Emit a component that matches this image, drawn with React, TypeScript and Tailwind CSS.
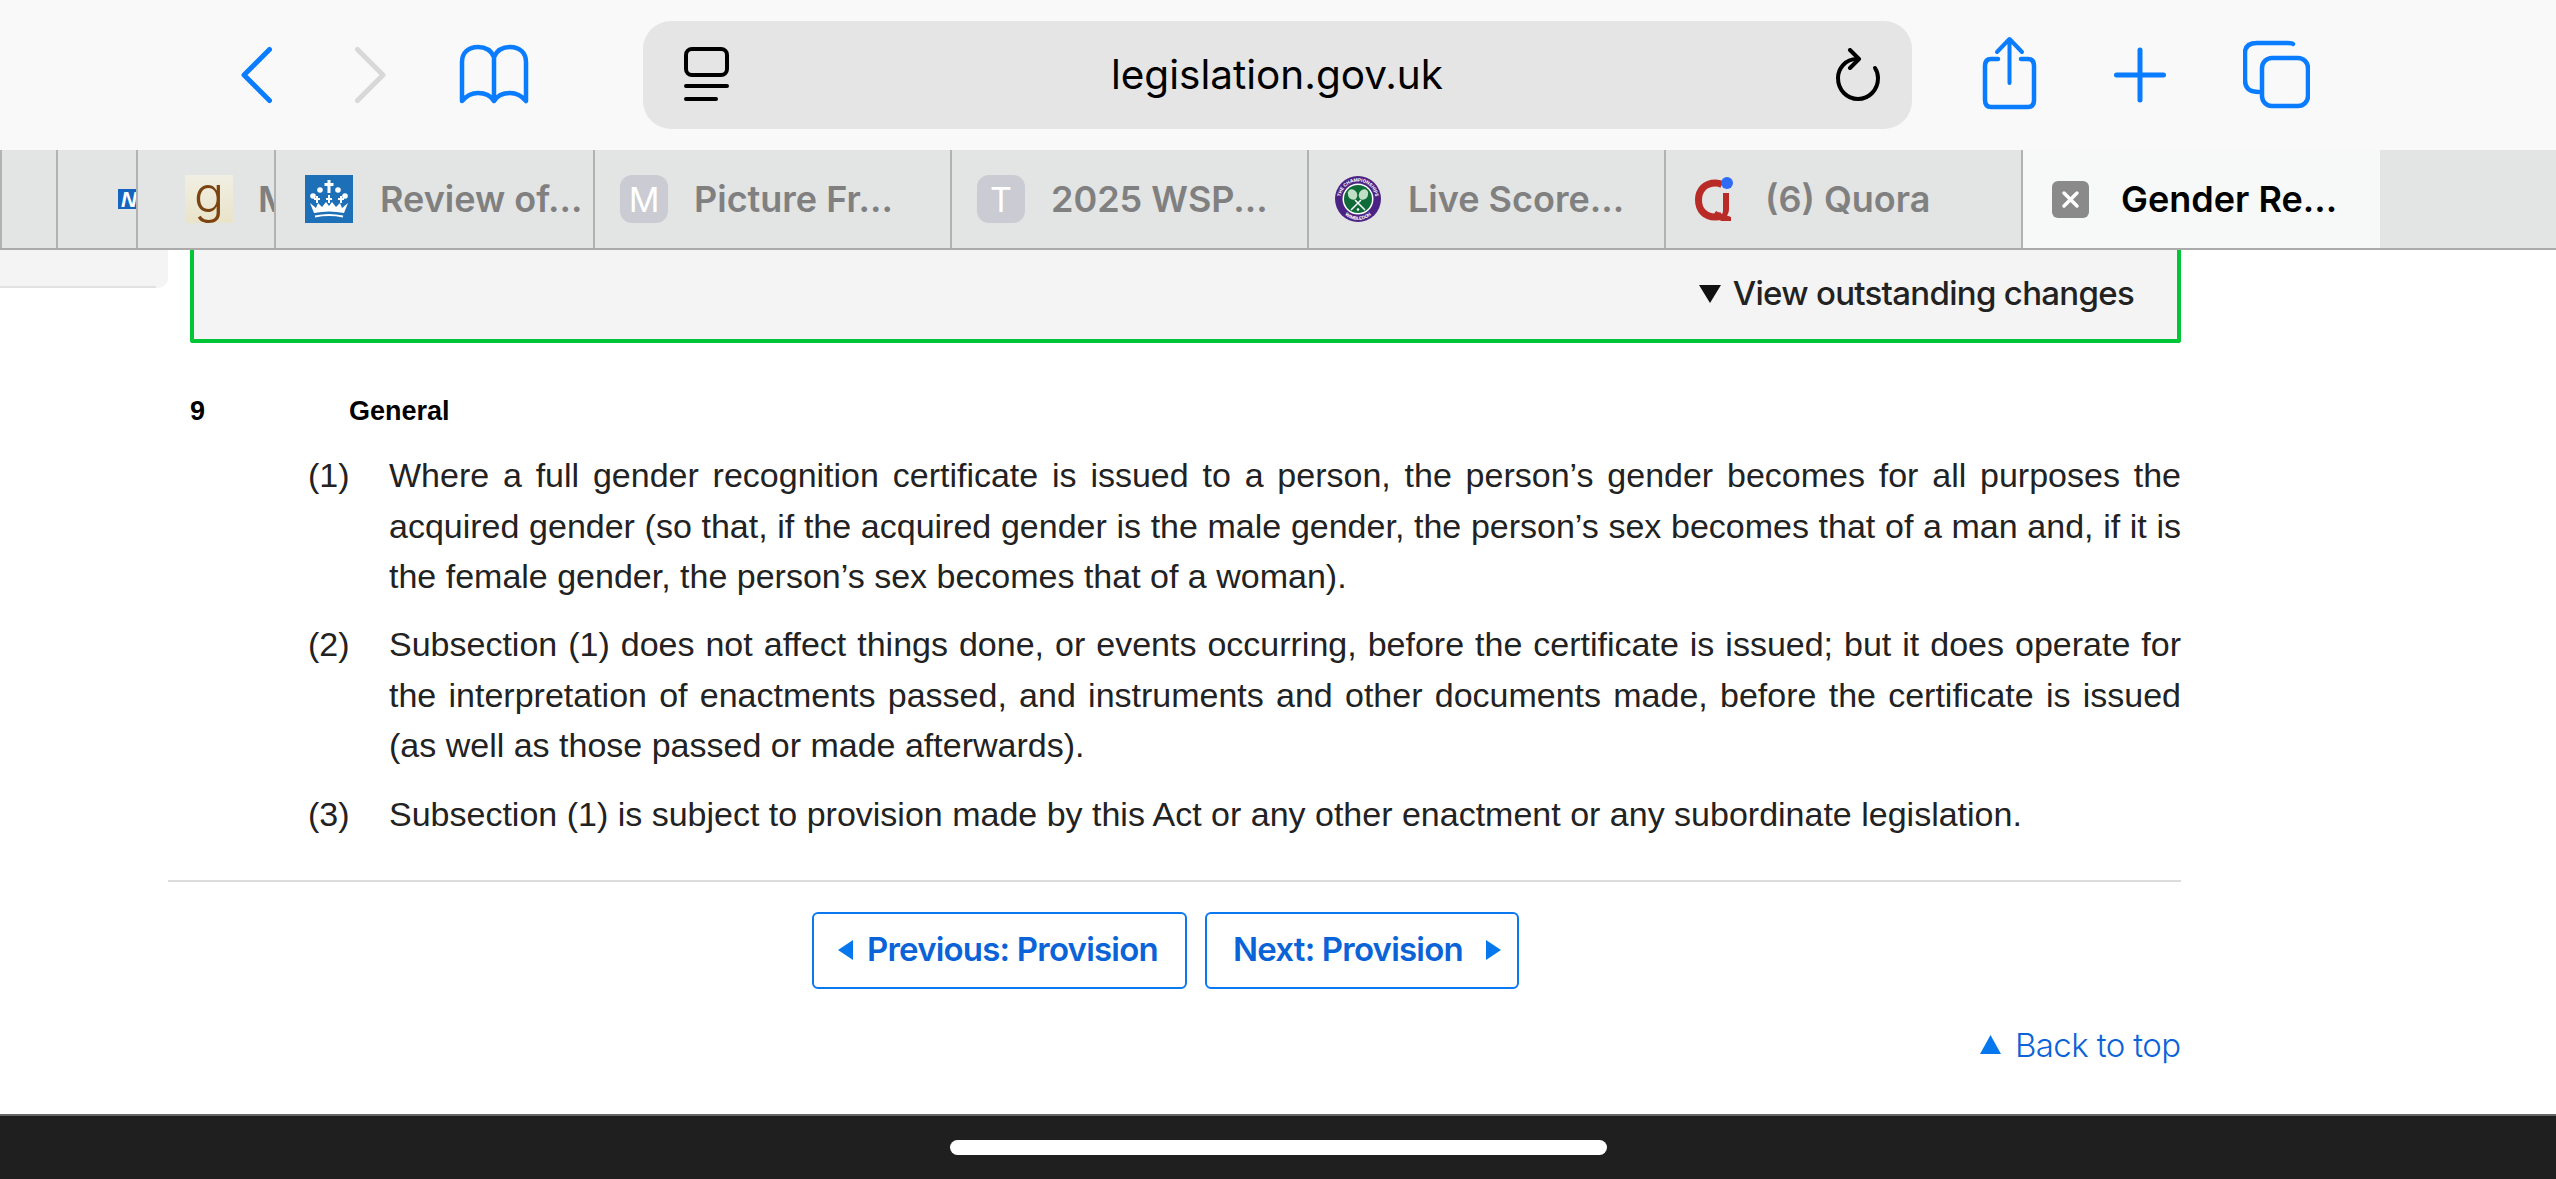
import type { ReactNode } from 'react';

const sans = "font-['Inter',sans-serif]";
const legal = "font-['Liberation_Sans',Arial,sans-serif]";

function ToolbarIcon({ width, className, children }: { width: number; className: string; children: ReactNode }) {
  return (
    <svg width={width} height={150} viewBox={`0 0 ${width} 150`} fill="none" strokeLinecap="round" strokeLinejoin="round" className={className}>
      {children}
    </svg>
  );
}

function Tab({ width, left, active, children }: { width: string; left: string; active?: boolean; children: ReactNode }) {
  return (
    <div
      className={`${width} ${left} ${active ? 'bg-[#f7f8f8] text-black' : 'border-r-2 border-[#b2b2b2] text-[#808080]'} flex h-full shrink-0 items-center overflow-hidden whitespace-nowrap text-[36px] font-semibold ${sans}`}
    >
      {children}
    </div>
  );
}

function LetterIcon({ letter }: { letter: string }) {
  return (
    <div className="flex h-[48px] w-[48px] shrink-0 items-center justify-center rounded-[12px] bg-[#cbcbd4] text-[34px] font-normal text-white">
      {letter}
    </div>
  );
}

function GovIcon() {
  return (
    <svg width="48" height="48" viewBox="0 0 48 48" className="shrink-0">
      <rect width="48" height="48" fill="#1d6fb8" />
      <g fill="#fff">
        <path d="M22.500 5h3v3h3v3h-3v7h-3v-7h-3V8h3z" />
        <circle cx="15" cy="15" r="2.800" />
        <circle cx="33" cy="15" r="2.800" />
        <circle cx="8" cy="21" r="2.800" />
        <circle cx="40" cy="21" r="2.800" />
        <path d="M11 21h2v2h2v2h-2v3h-2v-3H9v-2h2zM23 20h2v3h2v2h-2v3h-2v-3h-2v-2h2zM35 21h2v2h2v2h-2v3h-2v-3h-2v-2h2z" />
        <path d="M5 28l6 5 2-5 4 4 4-5 3 4 3-4 4 5 4-4 2 5 6-5-4 10q-15-3-30 0z" />
      </g>
      <path d="M10 41.500q14-3 28 0" fill="none" stroke="#fff" strokeWidth="2" />
    </svg>
  );
}

function WimbledonIcon() {
  return (
    <svg width="46" height="46" viewBox="0 0 46 46" className="shrink-0">
      <defs>
        <path id="ring-top" d="M5.500 23a17.500 17.500 0 0 1 35 0" />
        <path id="ring-bottom" d="M4 25a19 19 0 0 0 38 0" />
      </defs>
      <circle cx="23" cy="23" r="23" fill="#4b2385" />
      <circle cx="23" cy="23" r="15.500" fill="#fff" />
      <circle cx="23" cy="23" r="14" fill="#0f6b37" />
      <text fontSize="4.600" fontWeight="700" fill="#fff" fontFamily="Inter, sans-serif">
        <textPath href="#ring-top" startOffset="50%" textAnchor="middle">THE CHAMPIONSHIPS</textPath>
      </text>
      <text fontSize="4.600" fontWeight="700" fill="#fff" fontFamily="Inter, sans-serif">
        <textPath href="#ring-bottom" startOffset="50%" textAnchor="middle">WIMBLEDON</textPath>
      </text>
      <ellipse cx="17.500" cy="18.500" rx="4.500" ry="5.500" fill="#bfe0c4" transform="rotate(-25 17.500 18.500)" />
      <ellipse cx="28.500" cy="18.500" rx="4.500" ry="5.500" fill="#bfe0c4" transform="rotate(25 28.500 18.500)" />
      <path d="M20 24l10 10M26 24L16 34" stroke="#fff" strokeWidth="1.500" />
      <circle cx="23" cy="33.500" r="1.300" fill="#fff" />
    </svg>
  );
}

function QuoraIcon() {
  return (
    <svg width="44" height="48" viewBox="0 0 44 48" className="shrink-0">
      <path
        d="M28 9.500C26 8.500 24 8 21.500 8 11 8 4.500 15 4.500 25S11 42 21 42c3 0 5-.5 7-1.500"
        fill="none"
        stroke="#b92b27"
        strokeWidth="7"
      />
      <path d="M29 18h6v16c0 3-1 5-2 6.500l4 1.500v4H27l-7-7 2-3 6 3c1-1 1-3 1-5z" fill="#b92b27" />
      <circle cx="33" cy="8" r="6" fill="#2e6cf6" />
    </svg>
  );
}

function Clause({ num, children }: { num: string; children: ReactNode }) {
  return (
    <div className="mb-[17.500px] flex">
      <div className="w-[81px] shrink-0">{num}</div>
      <p className="flex-1 text-justify">{children}</p>
    </div>
  );
}

export default function App() {
  return (
    <div className="relative flex h-[1179px] w-[2556px] flex-col overflow-hidden bg-white">
      {/* safari toolbar */}
      <header className="flex h-[150px] shrink-0 bg-[#f8f9f8]">
        <ToolbarIcon width={31} className="ml-[241px] shrink-0">
          <path d="M28.500 49.500L3 75l25.500 25.500" stroke="#0a7cff" strokeWidth="5" />
        </ToolbarIcon>
        <ToolbarIcon width={31} className="ml-[83px] shrink-0">
          <path d="M2.500 49.500L28 75 2.500 100.500" stroke="#d7d8d7" strokeWidth="5" />
        </ToolbarIcon>
        <ToolbarIcon width={70} className="ml-[73px] shrink-0">
          <path
            d="M35 57c-3-7-9-10-16-10C9 47 3 53 3 62v39c5-6 10-8 16-8 7 0 13 3 16 8 3-5 9-8 16-8 6 0 11 2 16 8V62c0-9-6-15-16-15-7 0-13 3-16 10zM35 57v44"
            stroke="#0a7cff"
            strokeWidth="4.500"
          />
        </ToolbarIcon>

        <div className="ml-[114px] mt-[21px] flex h-[108px] w-[1269px] shrink-0 items-center justify-between rounded-[28px] bg-[#e4e5e4] pl-[41px] pr-[29px]">
          <svg width="45" height="56" viewBox="0 0 45 56" fill="none" className="shrink-0">
            <rect x="2" y="2" width="41" height="26" rx="6" stroke="#000" strokeWidth="4" />
            <path d="M2 39h41M2 52h30" stroke="#000" strokeWidth="4" strokeLinecap="round" />
          </svg>
          <span className={`text-[40.500px] leading-none text-black ${sans}`}>legislation.gov.uk</span>
          <div className="flex w-[58px] shrink-0 justify-end">
            <svg width="50" height="54" viewBox="0 0 50 54" fill="none" strokeLinecap="round" strokeLinejoin="round">
              <path d="M24 11C12 11 5 21 5 30c0 12 9 21 20 21s20-9 20-21c0-4-1-7-3-10" stroke="#000" strokeWidth="4" />
              <path d="M17 2l9 9-9 9" stroke="#000" strokeWidth="4" />
            </svg>
          </div>
        </div>

        <ToolbarIcon width={55} className="ml-[70px] shrink-0">
          <path d="M16 59H9c-4 0-6 2-6 7v34c0 5 2 7 6 7h37c4 0 6-2 6-7V66c0-5-2-7-6-7h-7" stroke="#0a7cff" strokeWidth="4.500" />
          <path d="M27.500 83V40M15 52l12.500-13L40 52" stroke="#0a7cff" strokeWidth="4" />
        </ToolbarIcon>
        <ToolbarIcon width={52} className="ml-[77px] shrink-0">
          <path d="M26 50v50M2.500 75h47" stroke="#0a7cff" strokeWidth="5" />
        </ToolbarIcon>
        <ToolbarIcon width={67} className="ml-[77px] shrink-0">
          <path d="M50 44c-1-1-3-1-5-1H14C6 43 2 46 2 53v27c0 7 3 12 14 12" stroke="#0a7cff" strokeWidth="4.500" />
          <rect x="19" y="58" width="46" height="48" rx="10" stroke="#0a7cff" strokeWidth="4.500" />
        </ToolbarIcon>
      </header>

      {/* tab strip */}
      <nav className="flex h-[100px] shrink-0 border-b-2 border-[#ababab] bg-[#e3e4e4]">
        <Tab width="w-[2px]" left="">{null}</Tab>
        <Tab width="w-[56px]" left="">{null}</Tab>
        <Tab width="w-[80px]" left="pl-[60px]">
          <span className={`flex h-[20px] w-[30px] shrink-0 items-center bg-[#1565c0] pl-[3px] text-[22px] font-black italic text-white ${legal}`}>N</span>
        </Tab>
        <Tab width="w-[138px]" left="pl-[47px]">
          <div className="flex h-[48px] w-[48px] shrink-0 items-center justify-center bg-gradient-to-b from-[#f1efe3] to-[#e9e3c9] pb-[10px] text-[50px] font-light text-[#7a4310]">g</div>
          <span className="ml-[25px]">M</span>
        </Tab>
        <Tab width="w-[319px]" left="pl-[29px]">
          <GovIcon />
          <span className="ml-[27px]">Review of...</span>
        </Tab>
        <Tab width="w-[357px]" left="pl-[25px]">
          <LetterIcon letter="M" />
          <span className="ml-[26px]">Picture Fr...</span>
        </Tab>
        <Tab width="w-[357px]" left="pl-[25px]">
          <LetterIcon letter="T" />
          <span className="ml-[26px]">2025 WSP...</span>
        </Tab>
        <Tab width="w-[357px]" left="pl-[26px]">
          <WimbledonIcon />
          <span className="ml-[27px]">Live Score...</span>
        </Tab>
        <Tab width="w-[357px]" left="pl-[28px]">
          <QuoraIcon />
          <span className="ml-[27px]">(6) Quora</span>
        </Tab>
        <Tab width="w-[357px]" left="pl-[29px]" active>
          <div className="flex h-[37px] w-[37px] shrink-0 items-center justify-center rounded-[6px] bg-[#8a8a8a]">
            <svg width="19" height="19" viewBox="0 0 19 19" stroke="#fff" strokeWidth="3.500" strokeLinecap="round">
              <path d="M3 3l13 13M16 3L3 16" />
            </svg>
          </div>
          <span className="ml-[32px]">Gender Re...</span>
        </Tab>
      </nav>

      {/* page content */}
      <main className={`relative flex flex-1 flex-col ${legal}`}>
        <div className="absolute left-0 top-0 h-[38px] w-[168px] rounded-br-[10px] bg-[#f4f4f4]">
          <div className="absolute bottom-0 left-0 h-[2px] w-[156px] bg-[#e1e1e1]" />
        </div>

        <div className={`ml-[190px] flex h-[93px] w-[1991px] shrink-0 items-center justify-end gap-[12px] rounded-b-[3px] border-x-[4px] border-b-[4px] border-[#00c537] bg-[#f4f4f4] pb-[2px] pr-[43px] text-[33px] font-medium tracking-[-0.7px] text-[#222] ${sans}`}>
          <svg width="22" height="18" viewBox="0 0 22 18" className="shrink-0"><path d="M0 0h22L11 18z" fill="#111" /></svg>
          View outstanding changes
        </div>

        <div className="ml-[190px] mt-[52px] flex text-[27px] font-bold leading-[32px] text-black">
          <div className="w-[159px]">9</div>
          <div>General</div>
        </div>

        <div className="ml-[308px] mt-[23px] w-[1873px] text-[34px] leading-[50.600px] text-[#222]">
          <Clause num="(1)">
            Where a full gender recognition certificate is issued to a person, the person’s gender becomes for all purposes the acquired gender (so that, if the acquired gender is the male gender, the person’s sex becomes that of a man and, if it is the female gender, the person’s sex becomes that of a woman).
          </Clause>
          <Clause num="(2)">
            Subsection (1) does not affect things done, or events occurring, before the certificate is issued; but it does operate for the interpretation of enactments passed, and instruments and other documents made, before the certificate is issued (as well as those passed or made afterwards).
          </Clause>
          <Clause num="(3)">
            Subsection (1) is subject to provision made by this Act or any other enactment or any subordinate legislation.
          </Clause>
        </div>

        <div className="ml-[168px] mt-[23px] h-[2px] w-[2013px] bg-[#dcdcdc]" />

        <div className={`ml-[812px] mt-[30px] flex gap-[18px] text-[33px] font-semibold tracking-[-0.8px] text-[#0b63d8] ${sans}`}>
          <div className="flex h-[77px] w-[375px] items-center rounded-[6px] border-2 border-[#0a78f0] pl-[24px]">
            <svg width="15" height="20" viewBox="0 0 15 20" className="shrink-0"><path d="M15 0v20L0 10z" fill="#0777ee" /></svg>
            <span className="ml-[14px] whitespace-nowrap">Previous: Provision</span>
          </div>
          <div className="flex h-[77px] w-[314px] items-center rounded-[6px] border-2 border-[#0a78f0] pl-[26px]">
            <span className="whitespace-nowrap">Next: Provision</span>
            <svg width="15" height="20" viewBox="0 0 15 20" className="ml-[23px] shrink-0"><path d="M0 0v20l15-10z" fill="#0777ee" /></svg>
          </div>
        </div>

        <div className={`ml-[1980px] mt-[34px] flex w-[201px] items-center text-[33px] font-light leading-[44px] tracking-[-0.6px] text-[#0b63d8] ${sans}`}>
          <svg width="21" height="19" viewBox="0 0 21 19" className="shrink-0"><path d="M10.500 0L21 19H0z" fill="#0777ee" /></svg>
          <span className="ml-[14px] whitespace-nowrap">Back to top</span>
        </div>
      </main>

      {/* home indicator */}
      <footer className="flex h-[65px] shrink-0 justify-center border-t-2 border-[#666] bg-[#1f1f1f] pt-[24px]">
        <div className="h-[15px] w-[657px] rounded-full bg-white" />
      </footer>
    </div>
  );
}
